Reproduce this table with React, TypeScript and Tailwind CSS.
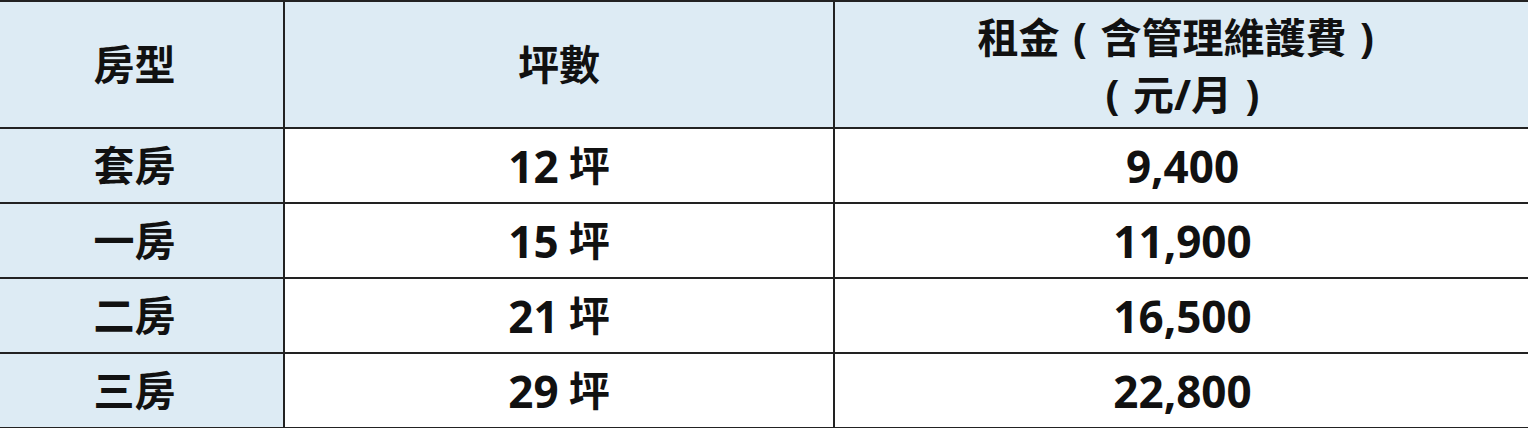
const rows = [
  { type: "套房", size: "12", rent: "9,400" },
  { type: "一房", size: "15", rent: "11,900" },
  { type: "二房", size: "21", rent: "16,500" },
  { type: "三房", size: "29", rent: "22,800" },
];

const font = {
  fontFamily: '"Noto Sans", "Noto Sans CJK TC", sans-serif',
};

// paren centred in a full-width box, like the JhengHei ones
function P({ c }: { c: string }) {
  return <span className="inline-block w-[1em] text-center">{c}</span>;
}

export default function App() {
  return (
    <div className="w-[1528px] h-[428px] overflow-hidden bg-white" style={font}>
      <div className="-ml-[14px] w-[1544px] border-t-2 border-[#222] text-[#111] font-bold text-[41px]">
        {/* header */}
        <div className="grid grid-cols-[299px_550px_1fr] h-[127px] border-b-2 border-[#222] bg-[#ddebf4]">
          <div className="flex items-center justify-center border-r-2 border-[#222]">房型</div>
          <div className="flex items-center justify-center border-r-2 border-[#222]">坪數</div>
          <div className="flex flex-col items-center justify-center leading-[57px] pt-[2px]">
            <span>
              租金<P c="(" />含管理維護費<P c=")" />
            </span>
            <span>
              <P c="(" />元/月<P c=")" />
            </span>
          </div>
        </div>

        {rows.map((r) => (
          <div key={r.type} className="grid grid-cols-[299px_550px_1fr] h-[75px] border-b-2 border-[#222]">
            <div className="flex items-center justify-center border-r-2 border-[#222] bg-[#ddebf4]">{r.type}</div>
            <div className="flex items-center justify-center border-r-2 border-[#222]">
              <span className="text-[44px]">{r.size}</span>
              <span className="ml-[10px]">坪</span>
            </div>
            <div className="flex items-center justify-center text-[44px]">{r.rent}</div>
          </div>
        ))}
      </div>
    </div>
  );
}
